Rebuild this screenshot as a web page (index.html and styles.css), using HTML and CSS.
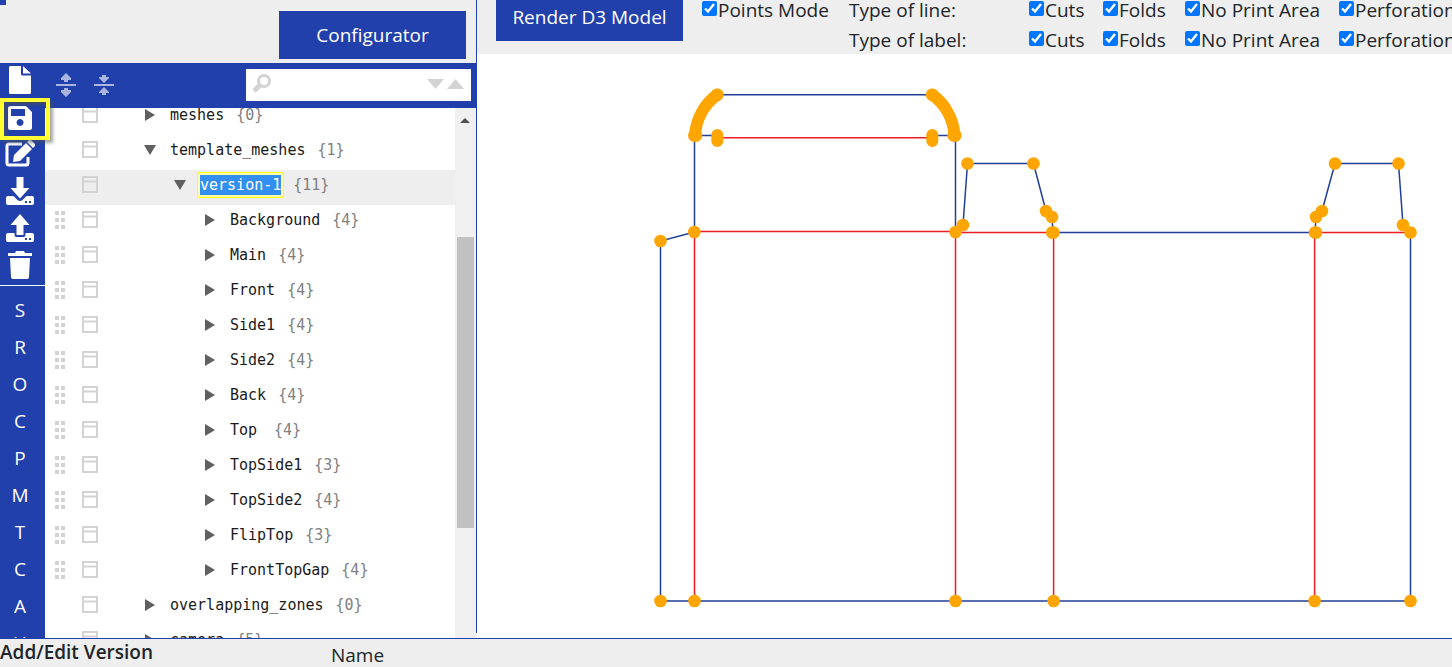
FILE: index.html
```html
<!DOCTYPE html>
<html lang="en">
<head>
    <meta charset="UTF-8">
    <meta name="viewport" content="width=device-width, initial-scale=1.0">
    <title>Template Configurator</title>
    <link rel="stylesheet" href="styles.css">
</head>
<body>
    <div class="main">
        <div class="editor-panel">
            <div class="editor-header">
                <div class="tab-edge"></div>
                <button class="btn">Configurator</button>
            </div>
            <div class="editor">
                <div class="sidebar">
                    <button class="icon-btn" title="New">
                        <svg width="22" height="28" viewBox="0 0 22 28"><path fill="#fff" d="M1.500 0H12v8q0 1.500 1.500 1.500H22v17q0 1.500-1.500 1.500h-19Q0 28 0 26.500v-25Q0 0 1.500 0z"/><path fill="#fff" d="M14 0l8 7.500h-8z"/></svg>
                    </button>
                    <button class="icon-btn save" title="Save">
                        <svg width="24" height="26" viewBox="0 0 24 26"><path fill="#fff" fill-rule="evenodd" d="M3 1h15l6 6v16q0 2-2 2H2q-2 0-2-2V3q0-2 3-2zM3 4v7h14V4zM12 14a3.500 3.500 0 1 0 .1 0z"/></svg>
                    </button>
                    <button class="icon-btn" title="Edit">
                        <svg width="30" height="28" viewBox="0 0 30 28"><path fill="none" stroke="#fff" stroke-width="3" d="M17 4H4q-2 0-2 2v17q0 2 2 2h17q2 0 2-2v-6"/><path fill="#fff" d="M9 15L21 3l6 6-12 12-7 1zM22 2l1.500-1.500q1.500-1.200 3 0l3 3q1.200 1.500 0 3L28 8z"/></svg>
                    </button>
                    <button class="icon-btn" title="Download">
                        <svg width="28" height="28" viewBox="0 0 28 28"><path fill="#fff" d="M10.500 0h7v11h6L14 21.500 4.500 11h6z"/><path fill="#fff" fill-rule="evenodd" d="M2 19h5.500l4 4q2.500 2 5 0l4-4H26q2 0 2 2v5q0 2-2 2H2q-2 0-2-2v-5q0-2 2-2zM19 24v2h2v-2zM23 24v2h2v-2z"/></svg>
                    </button>
                    <button class="icon-btn" title="Upload">
                        <svg width="28" height="28" viewBox="0 0 28 28"><path fill="#fff" d="M10.500 21h7V11h6L14 0 4.500 11h6z"/><path fill="#fff" fill-rule="evenodd" d="M2 19h6.500v2q0 2 2 2h7q2 0 2-2v-2H26q2 0 2 2v5q0 2-2 2H2q-2 0-2-2v-5q0-2 2-2zM19 24v2h2v-2zM23 24v2h2v-2z"/></svg>
                    </button>
                    <button class="icon-btn" title="Delete">
                        <svg width="24" height="28" viewBox="0 0 24 28"><path fill="#fff" d="M0 2h7l1-2h8l1 2h7v3H0zM2 7h20l-1 19q0 2-2 2H5q-2 0-2-2z"/></svg>
                    </button>
                    <div class="letters">
                        <button class="letter">S</button>
                        <button class="letter">R</button>
                        <button class="letter">O</button>
                        <button class="letter">C</button>
                        <button class="letter">P</button>
                        <button class="letter">M</button>
                        <button class="letter">T</button>
                        <button class="letter">C</button>
                        <button class="letter">A</button>
                        <button class="letter">U</button>
                    </div>
                </div>
                <div class="tree-panel">
                    <div class="menu-bar">
                        <button class="menu-btn" title="Expand all">
                            <svg width="20" height="26" viewBox="0 0 20 26"><path fill="#aab6e0" d="M0 12h20v2H0zM10 1l5 5v2h-3v2H8V8H5V6zM10 25l5-5v-2h-3v-2H8v2H5v2z"/></svg>
                        </button>
                        <button class="menu-btn" title="Collapse all">
                            <svg width="20" height="26" viewBox="0 0 20 26"><path fill="#aab6e0" d="M0 12h20v2H0zM10 11l5-5V5h-3V3H8v2H5v1zM10 15l5 5v1h-3v2H8v-2H5v-1z"/></svg>
                        </button>
                        <div class="search">
                            <svg width="20" height="20" viewBox="0 0 20 20"><circle cx="12" cy="7" r="5.500" fill="none" stroke="#d3d3d3" stroke-width="3"/><path stroke="#d3d3d3" stroke-width="5" d="M8 11l-6 6"/></svg>
                            <input type="text" aria-label="Search">
                            <button title="Next result"><svg width="17" height="10" viewBox="0 0 17 10"><path fill="#d3d3d3" d="M0 0h17L8.500 10z"/></svg></button>
                            <button title="Previous result"><svg width="17" height="10" viewBox="0 0 17 10"><path fill="#d3d3d3" d="M0 10h17L8.500 0z"/></svg></button>
                        </div>
                    </div>
                    <div class="tree-scroll">
                        <div class="tree" id="tree"></div>
                        <div class="scrollbar">
                            <svg width="10" height="5" viewBox="0 0 10 5"><path fill="#505050" d="M0 5h10L5 0z"/></svg>
                            <div class="thumb"></div>
                        </div>
                    </div>
                </div>
            </div>
        </div>

        <div class="model-panel">
            <div class="toolbar">
                <button class="btn">Render D3 Model</button>
                <label class="points-mode"><input type="checkbox" checked>Points Mode</label>
                <div class="filters">
                    <span>Type of line:</span>
                    <label><input type="checkbox" checked>Cuts</label>
                    <label><input type="checkbox" checked>Folds</label>
                    <label><input type="checkbox" checked>No Print Area</label>
                    <label><input type="checkbox" checked>Perforation</label>
                    <span>Type of label:</span>
                    <label><input type="checkbox" checked>Cuts</label>
                    <label><input type="checkbox" checked>Folds</label>
                    <label><input type="checkbox" checked>No Print Area</label>
                    <label><input type="checkbox" checked>Perforation</label>
                </div>
            </div>
            <svg class="model" viewBox="477 54 975 579">
                <g class="cuts">
                    <path d="M717 94.700H932M694.500 232V135.500H717M932 135.500H955.500V232"/>
                    <path d="M694.500 232L660.500 241V601H1410.500V232.500L1403 225L1398.500 163.500H1335L1322 211L1316 217L1315 232.500H1053L1052 217L1046 211L1033.500 163.500H967.500L963 225L955.500 232"/>
                </g>
                <g class="folds">
                    <path d="M717 137.700H932M694.500 231.500H955.500M955.500 232.500H1053M1315 232.500H1410.500"/>
                    <path d="M694.500 232V601M955.500 232V601M1053.600 232V601M1314.600 232V601"/>
                </g>
                <g class="curves">
                    <path d="M717.300 94.700A55 55 0 0 0 695 135.300M932.200 94.700A55 55 0 0 1 954.500 135.300M717.300 135V141M932.300 135V141"/>
                </g>
                <g id="points"></g>
            </svg>
        </div>
    </div>

    <div class="footer">
        <h2>Add/Edit Version</h2>
        <span>Name</span>
    </div>

    <script src="script.js"></script>
</body>
</html>
```
FILE: styles.css
```css
*,
*::after {
    box-sizing: border-box;
}

body {
    margin: 0;
    height: 100vh;
    display: flex;
    flex-direction: column;
    overflow: hidden;
    font-family: "Open Sans", "Segoe UI", sans-serif;
    font-size: 19px;
    line-height: 30px;
    color: #212529;
    background: #fff;
}

button {
    border: none;
    padding: 0;
    background: none;
    color: #fff;
    font-family: inherit;
    font-size: 19px;
    cursor: pointer;
}

svg {
    display: block;
}

.main {
    flex: 1;
    min-height: 0;
    display: flex;
}

.btn {
    flex: none;
    width: 187px;
    height: 48px;
    background: #2140ab;
}

/* Left side: json editor */
.editor-panel {
    flex: none;
    width: 476px;
    display: flex;
    flex-direction: column;
}

.editor-header {
    height: 63px;
    flex: none;
    display: flex;
    justify-content: space-between;
    padding-right: 10px;
    background: #eee;
}

.editor-header .btn {
    margin-top: 11px;
}

.tab-edge {
    width: 6px;
    height: 5px;
    background: #2140ab;
}

.editor {
    flex: 1;
    min-height: 0;
    display: flex;
}

.sidebar {
    position: relative;
    width: 45px;
    flex: none;
    display: flex;
    flex-direction: column;
    background: #2140ab;
}

.icon-btn {
    width: 40px;
    height: 37px;
    flex: none;
    display: flex;
    justify-content: center;
    padding-top: 3px;
}

.icon-btn.save {
    padding-top: 5px;
}

/* yellow frame round the save button */
.icon-btn.save::after {
    content: "";
    position: absolute;
    left: 0;
    top: 35px;
    width: 50px;
    height: 42px;
    border: 4px solid #ffff33;
    box-shadow: 3px 3px 3px rgba(80, 80, 80, 0.5), inset 3px 3px 3px rgba(80, 80, 80, 0.6);
    z-index: 2;
}

.letters {
    flex: 1;
    min-height: 0;
    overflow: hidden;
    padding-top: 5px;
    border-top: 1px solid #fff;
}

.letter {
    display: block;
    width: 40px;
    height: 37px;
}

.tree-panel {
    flex: 1;
    min-width: 0;
    display: flex;
    flex-direction: column;
}

.menu-bar {
    height: 45px;
    flex: none;
    display: flex;
    align-items: center;
    gap: 18px;
    padding: 0 5px 1px 11px;
    background: #2140ab;
}

.search {
    width: 225px;
    height: 32px;
    margin-left: auto;
    display: flex;
    align-items: center;
    gap: 3px;
    padding: 0 7px 2px 6px;
    background: #fff;
}

.search input {
    flex: 1;
    min-width: 0;
    border: none;
    outline: none;
}

.tree-scroll {
    flex: 1;
    min-height: 0;
    display: flex;
    overflow: hidden;
}

.tree {
    flex: 1;
    margin-top: -8px;
    font-family: "DejaVu Sans Mono", monospace;
    font-size: 15px;
}

.row {
    display: flex;
    align-items: center;
    height: 35px;
    padding-bottom: 6px;
    color: #1a1a1a;
}

.row.selected {
    background: #eee;
}

.cell {
    width: 30px;
    flex: none;
    display: flex;
    justify-content: center;
}

.indent {
    flex: none;
}

.indent-1 {
    width: 30px;
}

.indent-2 {
    width: 60px;
}

.indent-3 {
    width: 90px;
}

.name {
    min-width: 38px;
    margin-left: 2px;
    padding: 2px;
    border: 1px solid transparent;
    border-radius: 2px;
    line-height: 20px;
}

.selected .name {
    background: #ffffab;
    border-color: #ffff00;
}

.selected .name span {
    display: block;
    color: #fff;
    background: #338fef;
}

.size {
    margin-left: 9px;
    color: #808080;
}

.scrollbar {
    width: 21px;
    flex: none;
    padding: 10px 2px 0;
    background: #f0f0f0;
}

.scrollbar svg {
    margin-left: 3px;
}

.thumb {
    width: 17px;
    height: 56%;
    margin-top: 114px;
    background: #c1c1c1;
}

/* Right side: model */
.model-panel {
    flex: 1;
    min-width: 0;
    margin-bottom: 5px;
    border-left: 1px solid #2140ab;
    overflow: hidden;
}

.toolbar {
    height: 54px;
    display: flex;
    padding-left: 19px;
    background: #eee;
    overflow: hidden;
    white-space: nowrap;
}

.toolbar .btn {
    margin-top: -7px;
}

.toolbar label {
    display: flex;
    align-items: flex-start;
}

.toolbar input {
    width: 15px;
    height: 15px;
    margin: 6px 1px 0 0;
    flex: none;
}

.points-mode {
    width: 147px;
    flex: none;
    margin: -5px 0 0 19px;
}

.filters {
    display: grid;
    grid-template-columns: 180px 74px 82px 154px auto;
    grid-auto-rows: 30px;
    margin-top: -5px;
}

.model {
    width: 100%;
    height: auto;
}

.cuts path {
    fill: none;
    stroke: #213f99;
    stroke-width: 1.5px;
}

.folds path {
    fill: none;
    stroke: #ed1c24;
    stroke-width: 1.5px;
}

.curves path {
    fill: none;
    stroke: orange;
    stroke-width: 12px;
    stroke-linecap: round;
}

#points {
    fill: orange;
}

.footer {
    height: 29px;
    flex: none;
    display: flex;
    border-top: 1px solid #2140ab;
    background: #eee;
}

.footer h2 {
    width: 331px;
    margin: 0;
    font-size: 19px;
    font-weight: 600;
    line-height: 26px;
}

.footer span {
    line-height: 32px;
}
```
FILE: script.js
```js
// name, number of children, level
const rows = [
    ['meshes', 0, 1],
    ['template_meshes', 1, 1],
    ['version-1', 11, 2],
    ['Background', 4, 3],
    ['Main', 4, 3],
    ['Front', 4, 3],
    ['Side1', 4, 3],
    ['Side2', 4, 3],
    ['Back', 4, 3],
    ['Top', 4, 3],
    ['TopSide1', 3, 3],
    ['TopSide2', 4, 3],
    ['FlipTop', 3, 3],
    ['FrontTopGap', 4, 3],
    ['overlapping_zones', 0, 1],
    ['camera', 5, 1]
];

const dragIcon = '<svg width="10" height="20" viewBox="0 0 10 20"><path fill="#d3d3d3" d="M0 1h4v4H0zM6 1h4v4H6zM0 8h4v4H0zM6 8h4v4H6zM0 15h4v4H0zM6 15h4v4H6z"/></svg>';
const menuIcon = '<svg width="16" height="17" viewBox="0 0 16 17"><path fill="none" stroke="#d3d3d3" stroke-width="2" d="M1 1h14v15H1zM1 5.500h14"/></svg>';
const closedIcon = '<svg width="10" height="12" viewBox="0 0 10 12"><path fill="#606060" d="M0 0l10 6-10 6z"/></svg>';
const openIcon = '<svg width="12" height="10" viewBox="0 0 12 10"><path fill="#606060" d="M0 0h12L6 10z"/></svg>';

document.getElementById('tree').innerHTML = rows.map(([name, size, level]) => {
    const open = name === 'template_meshes' || name === 'version-1';
    return `<div class="row${name === 'version-1' ? ' selected' : ''}">
        <div class="cell">${level === 3 ? dragIcon : ''}</div>
        <button class="cell" title="Actions">${menuIcon}</button>
        <div class="indent indent-${level}"></div>
        <button class="cell" title="Expand or collapse">${open ? openIcon : closedIcon}</button>
        <div class="name"><span>${name}</span></div>
        <div class="size">{${size}}</div>
    </div>`;
}).join('');

// end points of the lines
const points = [
    [660.5, 241], [694.3, 232], [955.5, 232], [963, 225], [967.5, 163.5], [1033.5, 163.5],
    [1046, 211], [1052, 217], [1052.2, 232.5], [1053.5, 232.5], [1315, 232.5], [1316, 232.5],
    [1316, 217], [1322, 211], [1335, 163.5], [1398.5, 163.5], [1403, 225], [1410.5, 232.5],
    [694.3, 135.5], [696, 135.5], [953.7, 135.5], [955.3, 135.5], [717.3, 94.7], [932.2, 94.7],
    [660.5, 601], [694.5, 601], [955.5, 601], [1053.6, 601], [1314.6, 601], [1410.5, 601]
];

document.getElementById('points').innerHTML = points
    .map(([x, y]) => `<circle cx="${x}" cy="${y}" r="6.3"/>`)
    .join('');
```
